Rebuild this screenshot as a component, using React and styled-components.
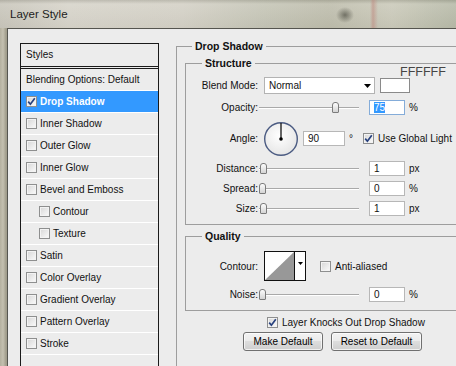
import React from "react";
import styled, { createGlobalStyle } from "styled-components";

const GlobalStyle = createGlobalStyle`
  html, body {
    margin: 0;
    padding: 0;
    overflow: hidden;
    background: #ececec;
  }
  body {
    font-family: "Liberation Sans", Arial, sans-serif;
    font-size: 10px;
    color: #111;
  }
  * {
    box-sizing: border-box;
  }
`;

const Window = styled.div`
  width: 456px;
  height: 366px;
  display: flex;
  flex-direction: column;
  overflow: hidden;
  background: linear-gradient(to right, #b4b09f 0px, #c4c0b0 3px, #a19d8c 6px);
`;

const TitleBar = styled.div`
  height: 28px;
  flex-shrink: 0;
  display: flex;
  align-items: center;
  padding-left: 10px;
  font-size: 11.5px;
  color: #1c1c1c;
  background:
    radial-gradient(ellipse 9px 8px at 345px 15px, rgba(60, 60, 50, 0.6), transparent),
    linear-gradient(to right, transparent 370px, rgba(190, 135, 125, 0.55) 373px, transparent 378px),
    linear-gradient(to bottom, rgba(80, 80, 70, 0.18) 0px, rgba(255, 255, 255, 0.12) 4px, rgba(0, 0, 0, 0.02) 28px),
    linear-gradient(to right, #c8c5ba 0%, #d6d3c9 15%, #d3d0c5 40%, #c4c4b5 58%, #bdbcab 72%, #cac9b9 86%, #b6b9a7 100%);
`;

const Client = styled.div`
  flex: 1;
  min-height: 0;
  display: flex;
  margin-left: 7px;
  border-left: 1px solid #55554f;
  border-top: 1px solid #55554f;
  background: #ececec;
`;

const LeftPane = styled.div`
  display: flex;
  flex-direction: column;
  flex-shrink: 0;
  padding: 14px 0 0 12px;
`;

const StylesBox = styled.div`
  flex: 1;
  width: 139px;
  border: 1px solid #1a1a1a;
  border-bottom: none;
`;

const StylesHeader = styled.div`
  height: 25px;
  padding-left: 5px;
  line-height: 22px;
  border-bottom: 3px double #1a1a1a;
`;

const ListRow = styled.div`
  height: 22px;
  display: flex;
  align-items: center;
  padding-left: ${(p) => (p.$indent ? 18 : 5)}px;
  border-bottom: 1px solid #ffffff;
  background: ${(p) => (p.$active ? "#3399ff" : "transparent")};
  color: ${(p) => (p.$active ? "#ffffff" : "#111")};
  font-weight: ${(p) => (p.$active ? "bold" : "normal")};
  white-space: nowrap;
`;

const ItemText = styled.span`
  margin-left: ${(p) => p.$ml ?? 3}px;
  white-space: nowrap;
`;

const Box = styled.span`
  width: 11px;
  height: 11px;
  flex-shrink: 0;
  margin-left: ${(p) => p.$ml ?? 0}px;
  display: inline-flex;
  align-items: center;
  justify-content: center;
  border: 1px solid #8e8f8f;
  background: linear-gradient(135deg, #d6d6d6 0%, #f0f0f0 70%, #fbfbfb 100%);
  box-shadow: inset 0 0 0 1px #f3f3f3;
`;

const RightPane = styled.div`
  flex-shrink: 0;
  width: 340px;
  padding: 10px 0 0 17px;
`;

const Group = styled.fieldset`
  margin: ${(p) => p.$m};
  width: ${(p) => p.$w}px;
  min-width: 0;
  padding: 0 0 ${(p) => p.$pb}px 0;
  border: 1px solid #9d9d9d;
  border-bottom: ${(p) => (p.$open ? "none" : "1px solid #9d9d9d")};
`;

const Legend = styled.legend`
  margin-left: ${(p) => p.$indent}px;
  padding: 0 3px;
  font-size: 10.5px;
  line-height: 14px;
  font-weight: bold;
  color: #111;
`;

const Row = styled.div`
  display: flex;
  align-items: center;
  height: ${(p) => p.$h}px;
  margin-top: ${(p) => p.$mt}px;
  padding-left: ${(p) => p.$pl ?? 0}px;
  white-space: nowrap;
`;

const Label = styled.span`
  width: 72px;
  flex-shrink: 0;
  text-align: right;
  white-space: nowrap;
`;

const Select = styled.div`
  width: 111px;
  height: 17px;
  margin-left: 6px;
  display: flex;
  align-items: center;
  justify-content: space-between;
  padding: 0 3px 0 4px;
  border: 1px solid #b3b3b3;
  background: #ffffff;
`;

const SwatchWrap = styled.div`
  position: relative;
  margin-left: 5px;
`;

const Swatch = styled.div`
  width: 30px;
  height: 15px;
  border: 1px solid #8a8a8a;
  background: ${(p) => p.$color};
`;

const HexLabel = styled.span`
  position: absolute;
  left: 20px;
  top: -12px;
  font-size: 12.5px;
  line-height: 12px;
  color: #454545;
  white-space: nowrap;
`;

const SliderWrap = styled.div`
  position: relative;
  width: 100px;
  height: 15px;
  margin-left: 1px;
  flex-shrink: 0;
`;

const Track = styled.div`
  position: absolute;
  left: 0;
  right: 0;
  top: 7px;
  height: 2px;
  border-top: 1px solid #a9a9a9;
  background: #ffffff;
`;

const Thumb = styled.div`
  position: absolute;
  top: 2px;
  width: 7px;
  height: 11px;
  border: 1px solid #7b7b7b;
  border-radius: 3px 3px 1px 1px;
  background: linear-gradient(to bottom, #fdfdfd, #d4d4d4);
`;

const NumberBox = styled.div`
  width: ${(p) => p.$w}px;
  height: 15px;
  margin-left: ${(p) => p.$ml}px;
  flex-shrink: 0;
  display: flex;
  align-items: center;
  padding-left: 4px;
  border: 1px solid ${(p) => (p.$focused ? "#84acd9" : "#b7b7b7")};
  background: #ffffff;
`;

const Selected = styled.span`
  background: #3399ff;
  color: #ffffff;
  line-height: 11px;
`;

const Unit = styled.span`
  margin-left: ${(p) => p.$ml ?? 4}px;
`;

const Dial = styled.svg`
  margin-left: 5px;
  flex-shrink: 0;
`;

const ContourBox = styled.div`
  display: flex;
  height: 30px;
  margin-left: 6px;
  border: 1px solid #111;
  background: #ffffff;
`;

const ContourArrow = styled.div`
  width: 11px;
  display: flex;
  justify-content: center;
  padding-top: 10px;
  border-left: 1px solid #111;
`;

const ButtonRow = styled.div`
  display: flex;
  gap: 8px;
  margin-top: 4px;
  padding-left: 66px;
`;

const Button = styled.button`
  width: ${(p) => p.$w}px;
  height: 19px;
  padding: 0;
  font-family: inherit;
  font-size: 10px;
  color: #000;
  border: 1px solid #707070;
  border-radius: 3px;
  background: linear-gradient(to bottom, #f2f2f2 0%, #ebebeb 45%, #dddddd 50%, #cfcfcf 100%);
  box-shadow: inset 0 0 0 1px rgba(255, 255, 255, 0.7);
`;

const Checkbox = ({ checked, ml }) => (
  <Box $ml={ml}>
    {checked && (
      <svg width="9" height="9" viewBox="0 0 9 9">
        <path d="M1.2 4.6 L3.4 7.2 L7.8 1.2" fill="none" stroke="#27417e" strokeWidth="1.7" />
      </svg>
    )}
  </Box>
);

const Arrow = () => (
  <svg width="7" height="4" viewBox="0 0 7 4">
    <polygon points="0,0 7,0 3.5,4" fill="#000" />
  </svg>
);

const Slider = ({ value }) => (
  <SliderWrap>
    <Track />
    <Thumb style={{ left: `${Math.round(value * 0.97)}px` }} />
  </SliderWrap>
);

const SliderRow = ({ label, value, unit, mt, focused }) => (
  <Row $h={15} $mt={mt}>
    <Label>{label}</Label>
    <Slider value={value} />
    <NumberBox $w={36} $ml={10} $focused={focused}>
      {focused ? <Selected>{value}</Selected> : value}
    </NumberBox>
    <Unit>{unit}</Unit>
  </Row>
);

const effects = [
  { name: "Drop Shadow", checked: true, active: true },
  { name: "Inner Shadow" },
  { name: "Outer Glow" },
  { name: "Inner Glow" },
  { name: "Bevel and Emboss" },
  { name: "Contour", indent: true },
  { name: "Texture", indent: true },
  { name: "Satin" },
  { name: "Color Overlay" },
  { name: "Gradient Overlay" },
  { name: "Pattern Overlay" },
  { name: "Stroke" },
];

export default function App() {
  return (
    <Window>
      <GlobalStyle />
      <TitleBar>Layer Style</TitleBar>
      <Client>
        <LeftPane>
          <StylesBox>
            <StylesHeader>Styles</StylesHeader>
            <ListRow>Blending Options: Default</ListRow>
            {effects.map((fx) => (
              <ListRow key={fx.name} $indent={fx.indent} $active={fx.active}>
                <Checkbox checked={fx.checked} />
                <ItemText>{fx.name}</ItemText>
              </ListRow>
            ))}
          </StylesBox>
        </LeftPane>

        <RightPane>
          <Group $m="0" $w={330} $pb={30} $open>
            <Legend $indent={15}>Drop Shadow</Legend>

            <Group $m="3px 0 0 8px" $w={300} $pb={8}>
              <Legend $indent={16}>Structure</Legend>
              <Row $h={17} $mt={7}>
                <Label>Blend Mode:</Label>
                <Select>
                  Normal
                  <Arrow />
                </Select>
                <SwatchWrap>
                  <HexLabel>FFFFFF</HexLabel>
                  <Swatch $color="#ffffff" />
                </SwatchWrap>
              </Row>
              <SliderRow label="Opacity:" value={75} unit="%" mt={6} focused />
              <Row $h={35} $mt={6}>
                <Label>Angle:</Label>
                <Dial width="36" height="36" viewBox="0 0 36 36">
                  <defs>
                    <radialGradient id="dialFill" cx="45%" cy="40%" r="60%">
                      <stop offset="0%" stopColor="#ffffff" />
                      <stop offset="100%" stopColor="#e6e6e6" />
                    </radialGradient>
                  </defs>
                  <circle cx="18" cy="18" r="16.3" fill="url(#dialFill)" stroke="#4b5b82" strokeWidth="1.4" />
                  <line x1="18" y1="18" x2="18" y2="2" stroke="#000" strokeWidth="1.2" />
                  <circle cx="18" cy="18" r="1.8" fill="#000" />
                </Dial>
                <NumberBox $w={42} $ml={4}>90</NumberBox>
                <Unit>°</Unit>
                <Checkbox checked ml={10} />
                <ItemText $ml={4}>Use Global Light</ItemText>
              </Row>
              <SliderRow label="Distance:" value={1} unit="px" mt={5} />
              <SliderRow label="Spread:" value={0} unit="%" mt={5} />
              <SliderRow label="Size:" value={1} unit="px" mt={5} />
            </Group>

            <Group $m="4px 0 0 8px" $w={300} $pb={8}>
              <Legend $indent={16}>Quality</Legend>
              <Row $h={30} $mt={8}>
                <Label>Contour:</Label>
                <ContourBox>
                  <svg width="29" height="28" viewBox="0 0 29 28">
                    <polygon points="0,28 29,0 29,28" fill="#989898" />
                  </svg>
                  <ContourArrow>
                    <svg width="5" height="3" viewBox="0 0 5 3">
                      <polygon points="0,0 5,0 2.5,3" fill="#000" />
                    </svg>
                  </ContourArrow>
                </ContourBox>
                <Checkbox ml={14} />
                <ItemText $ml={4}>Anti-aliased</ItemText>
              </Row>
              <SliderRow label="Noise:" value={0} unit="%" mt={6} />
            </Group>

            <Row $h={12} $mt={5} $pl={90}>
              <Checkbox checked />
              <ItemText $ml={4}>Layer Knocks Out Drop Shadow</ItemText>
            </Row>
            <ButtonRow>
              <Button $w={80}>Make Default</Button>
              <Button $w={91}>Reset to Default</Button>
            </ButtonRow>
          </Group>
        </RightPane>
      </Client>
    </Window>
  );
}
